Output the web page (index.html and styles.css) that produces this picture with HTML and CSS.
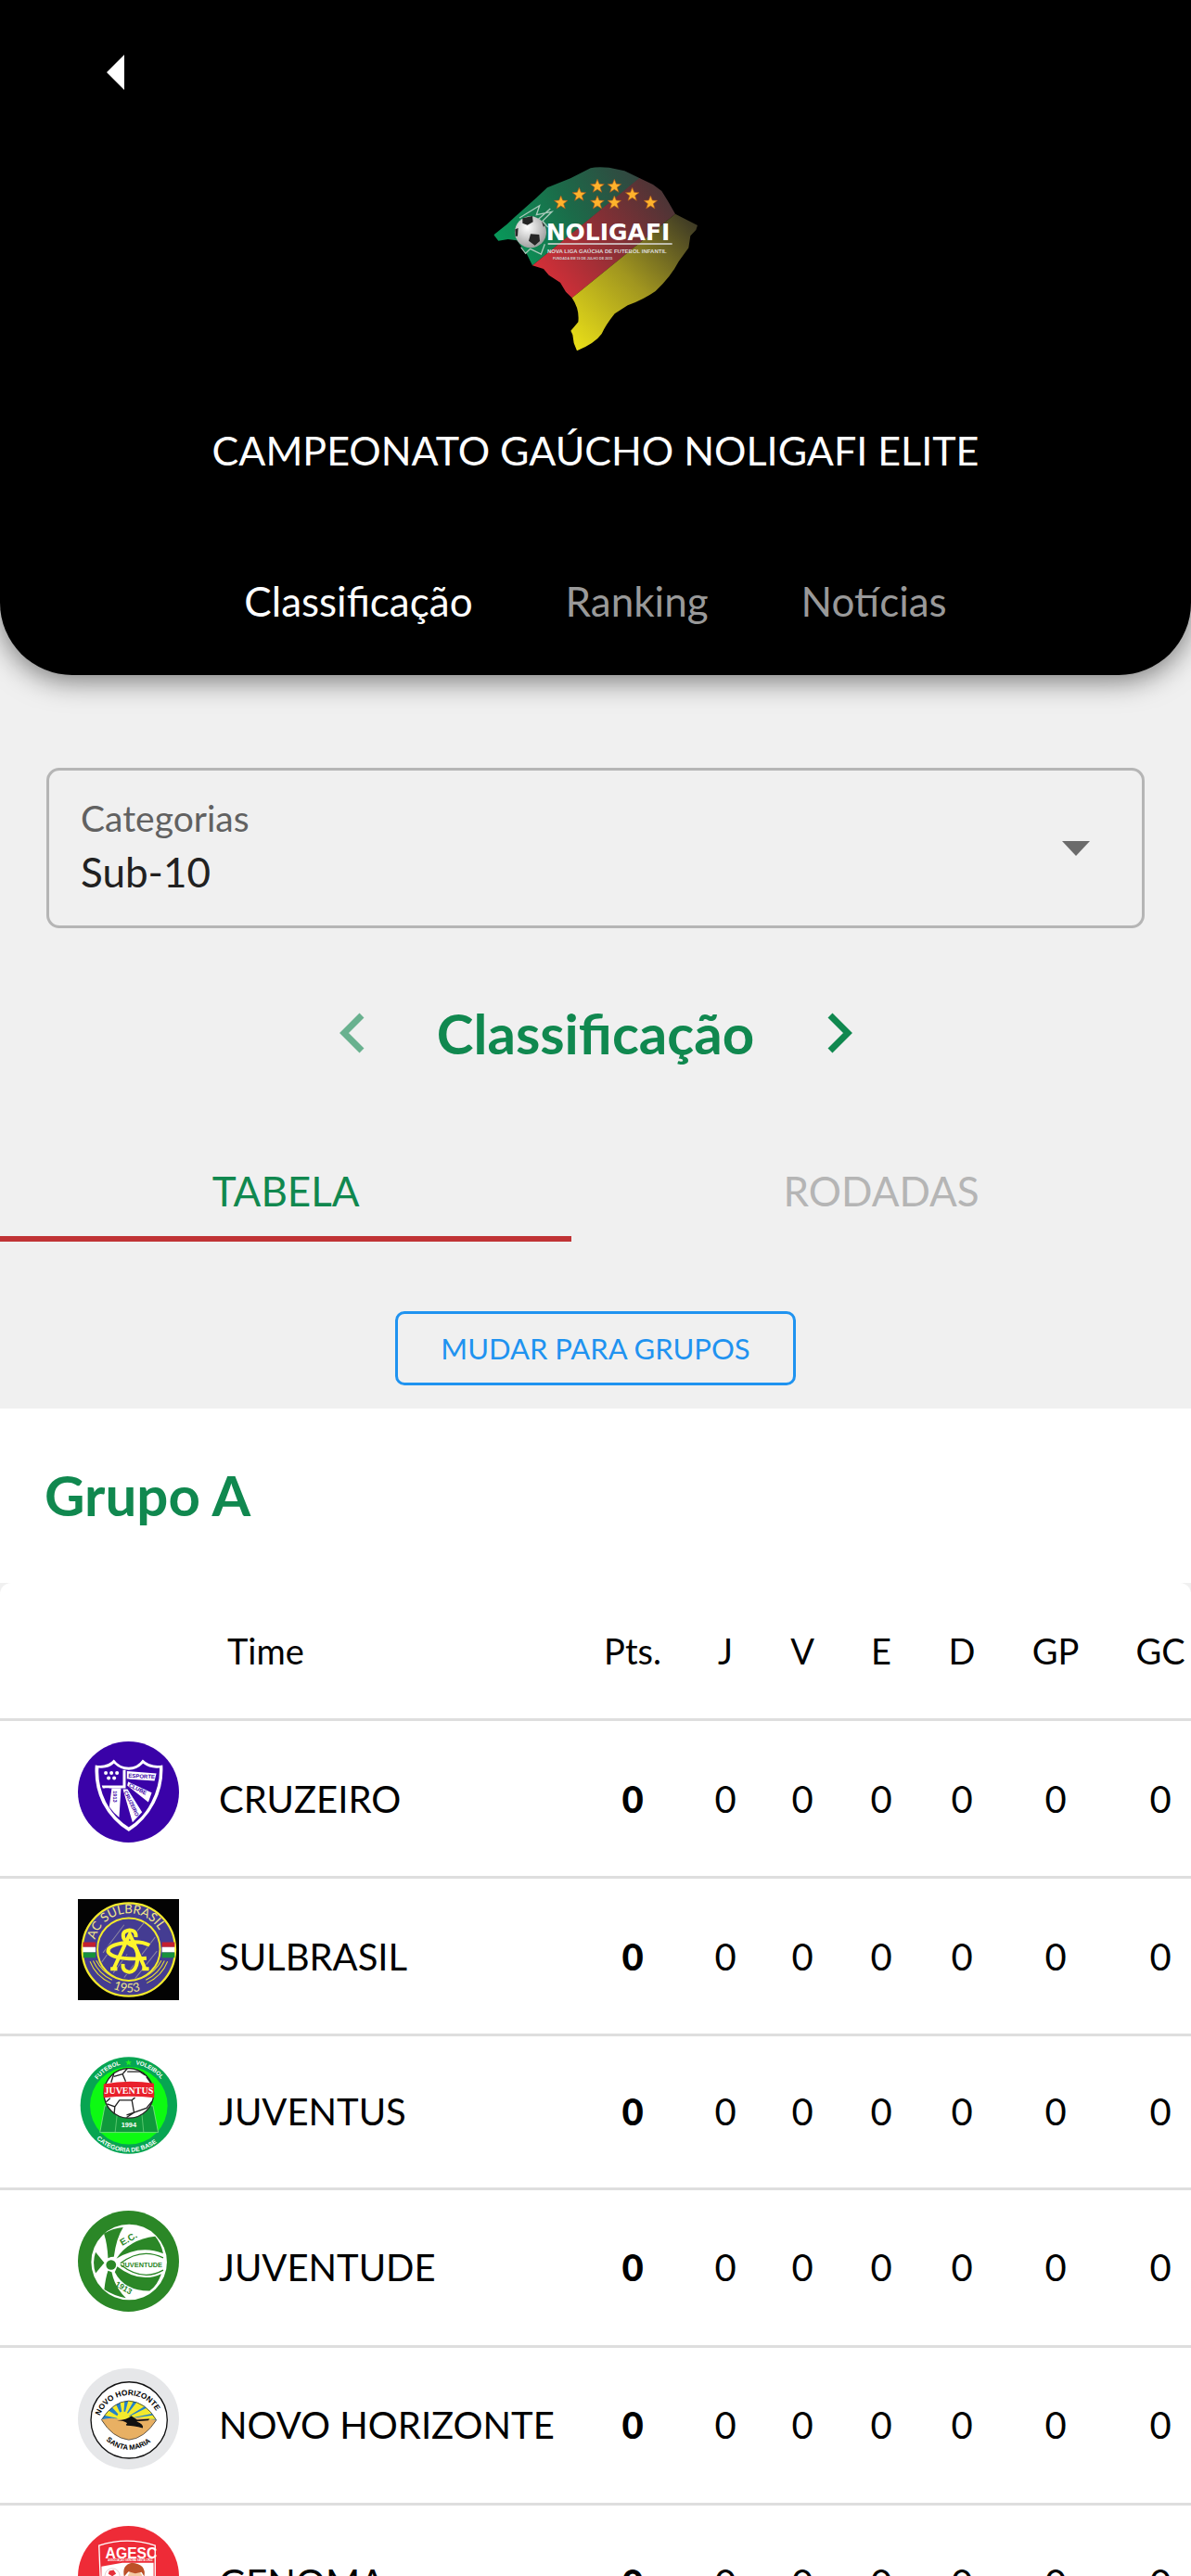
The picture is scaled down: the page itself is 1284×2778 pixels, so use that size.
FILE: index.html
```
<!DOCTYPE html>
<html lang="pt-BR">
<head>
<meta charset="utf-8">
<meta name="viewport" content="width=device-width, initial-scale=1">
<title>Campeonato Gaúcho Noligafi Elite</title>
<link rel="stylesheet" href="styles.css">
</head>
<body>
<div class="app">
  <header class="hero">
    <button class="back" type="button" aria-label="Voltar">
      <svg width="56" height="56" viewBox="0 0 56 56"><path d="M37 9v38L18 28z" fill="#fff"/></svg>
    </button>
    <svg class="hero-logo" width="280" height="230" viewBox="6 0 840 690" role="img" aria-label="Noligafi">
      <defs>
        <linearGradient id="g1" x1="100" y1="300" x2="560" y2="60" gradientUnits="userSpaceOnUse"><stop offset="0" stop-color="#08995a"/><stop offset=".5" stop-color="#1b6b49"/><stop offset="1" stop-color="#34443f"/></linearGradient>
        <linearGradient id="g2" x1="280" y1="450" x2="660" y2="150" gradientUnits="userSpaceOnUse"><stop offset="0" stop-color="#d52f38"/><stop offset=".5" stop-color="#8b2f35"/><stop offset="1" stop-color="#493536"/></linearGradient>
        <linearGradient id="g3" x1="360" y1="640" x2="750" y2="240" gradientUnits="userSpaceOnUse"><stop offset="0" stop-color="#e8de18"/><stop offset=".5" stop-color="#a1961f"/><stop offset="1" stop-color="#3d3925"/></linearGradient>
        <radialGradient id="g4" cx=".4" cy=".35" r=".7"><stop offset="0" stop-color="#fff"/><stop offset="1" stop-color="#999"/></radialGradient>
        <clipPath id="state"><path d="M97 280L140 245L165 222L235 160L270 127L345 97L410 64Q430 58 470 62L520 73L568 96L612 117L640 138L660 170L684 212L756 249L751 264L733 283L727 322L695 366Q670 415 620 462Q580 490 530 508L488 535Q460 570 446 600Q425 630 366 655L356 630L352 603L346 590L370 562Q375 520 350 484L330 464L312 434L275 410L258 390L222 379L205 344L172 298L143 294L112 299Z"/></clipPath>
        <path id="star" d="M0-22L6-7L22-6L9 4L14 20L0 11L-14 20L-9 4L-22-6L-6-7Z"/>
      </defs>
      <g clip-path="url(#state)">
        <path fill="url(#g1)" d="M80 40H640L222 379L80 420Z"/>
        <path fill="url(#g2)" d="M568 96L222 379L200 500H340L350 484L684 212L700 60Z"/>
        <path fill="url(#g3)" d="M684 212L350 484L300 690H780V200Z"/>
      </g>
      <g fill="#ffb32c" stroke="#a8561c" stroke-width="2">
        <use href="#star" x="314" y="175"/><use href="#star" x="373" y="149"/><use href="#star" x="432" y="122"/><use href="#star" x="487" y="122"/><use href="#star" x="432" y="175"/><use href="#star" x="487" y="175"/><use href="#star" x="545" y="149"/><use href="#star" x="604" y="175"/>
      </g>
      <path d="M180 225L245 185L235 215L285 205L255 235L272 255M185 320L200 340L215 325L250 342L262 310M240 230L280 195" fill="none" stroke="#a9c9ba" stroke-width="4"/>
      <circle cx="216" cy="271" r="51" fill="url(#g4)"/>
      <path d="M190 226L222 219L224 238L206 248L190 242ZM216 277L244 279L246 300L230 314L210 299ZM166 262L176 258L174 284L167 284ZM252 236L262 250L258 254Z" fill="#262626"/>
      <text x="266" y="297" class="logo-word">NOLIGAFI</text>
      <path d="M272 309H674" stroke="#ddd" stroke-width="4"/>
      <text x="270" y="338" class="logo-sub">NOVA LIGA GAÚCHA DE FUTEBOL INFANTIL</text>
      <text x="288" y="359" class="logo-tiny">FUNDADA EM 19 DE JULHO DE 2015</text>
    </svg>
    <h1 class="hero-title">CAMPEONATO GAÚCHO NOLIGAFI ELITE</h1>
    <nav class="hero-nav">
      <a href="#classificacao" class="active">Classificação</a>
      <a href="#ranking">Ranking</a>
      <a href="#noticias">Notícias</a>
    </nav>
  </header>

  <main>
    <div class="field">
      <label for="categoria">Categorias</label>
      <select id="categoria"><option>Sub-10</option></select>
      <svg class="caret" width="30" height="18" viewBox="0 0 30 18"><path d="M0 2h30L15 18z" fill="#6b6b6b"/></svg>
    </div>

    <div class="stage" id="classificacao">
      <button type="button" aria-label="Fase anterior" disabled><svg width="72" height="72" viewBox="0 0 72 72"><path d="M47 17L28 36L47 55" /></svg></button>
      <h2>Classificação</h2>
      <button type="button" aria-label="Próxima fase"><svg width="72" height="72" viewBox="0 0 72 72"><path d="M26 17L45 36L26 55"/></svg></button>
    </div>

    <div class="tabs" role="tablist">
      <button type="button" role="tab" aria-selected="true">TABELA</button>
      <button type="button" role="tab" aria-selected="false">RODADAS</button>
    </div>

    <div class="switch"><button type="button">MUDAR PARA GRUPOS</button></div>

    <h2 class="group">Grupo A</h2>

    <div class="table-wrap">
      <table>
        <colgroup><col class="c-logo"><col class="c-team"><col class="c-pts"><col class="c-j"><col class="c-v"><col class="c-e"><col class="c-d"><col class="c-gp"><col class="c-gc"></colgroup>
        <thead><tr><th></th><th class="team" scope="col">Time</th><th scope="col">Pts.</th><th scope="col">J</th><th scope="col">V</th><th scope="col">E</th><th scope="col">D</th><th scope="col">GP</th><th scope="col">GC</th></tr></thead>
        <tbody>
          <tr>
            <td class="logo"><svg viewBox="41 39 326 326" class="crest">
              <circle cx="204" cy="202" r="163" fill="#3a02a8"/>
              <path d="M97 115Q135 122 157 97Q175 122 205 122Q232 122 250 97Q275 122 314 115Q318 180 288 238Q258 296 205 329Q150 296 120 238Q92 180 97 115Z" fill="#fff"/>
              <path d="M108 124Q138 128 157 110Q178 130 205 131Q232 130 251 110Q275 128 304 124Q306 180 278 234Q252 286 205 316Q158 286 131 234Q104 180 108 124Z" fill="#3a02a8"/>
              <path d="M186 131V181H118L121 190H195V131Z" fill="#fff"/>
              <path d="M199 135L294 142L288 166L199 160ZM203 169L279 204L268 235L200 181ZM186 193L201 193L248 267L217 300ZM150 190H180L174 284Q156 270 142 250Z" fill="#fff"/>
              <path d="M128 190H142L136 240ZM199 160L288 172L284 200L203 167Z" fill="#3a02a8"/>
              <g fill="#fff"><circle cx="131" cy="141" r="6"/><circle cx="149" cy="141" r="6"/><circle cx="167" cy="141" r="6"/><circle cx="140" cy="157" r="6"/><circle cx="158" cy="157" r="6"/></g>
              <g fill="#3a02a8" class="crest-bold"><text x="203" y="155" font-size="18" transform="rotate(3 203 155)">ESPORTE</text><text x="204" y="184" font-size="18" transform="rotate(27 204 184)">CLUBE</text><text x="189" y="202" font-size="17" transform="rotate(64 189 202)">CRUZEIRO</text><text x="156" y="198" font-size="17" transform="rotate(90 156 198)">1913</text></g>
            </svg></td>
            <td class="team">CRUZEIRO</td><td class="pts">0</td><td>0</td><td>0</td><td>0</td><td>0</td><td>0</td><td>0</td>
          </tr>
          <tr>
            <td class="logo"><svg viewBox="41 37 326 326" class="crest">
              <path d="M41 37H367V363H41Z" fill="#030303"/>
              <circle cx="205" cy="200" r="150" fill="#443c92" stroke="#f3ea2c" stroke-width="7"/>
              <g><path d="M57 176H98V192H57ZM312 176H353V192H312Z" fill="#c41f30"/><path d="M57 192H98V209H57ZM312 192H353V209H312Z" fill="#fff"/><path d="M58 209H98V226H58ZM312 209H353V226H312Z" fill="#16923c"/></g>
              <circle cx="205" cy="199" r="101" fill="#443c92" stroke="#f3ea2c" stroke-width="6"/>
              <path d="M122 210L190 120M118 240L150 196M155 275L200 215M220 155L255 112M190 290L290 160M225 294L296 205" stroke="#8b85a0" stroke-width="3"/>
              <path d="M80 238Q98 285 147 308M90 236Q108 278 151 298M100 235Q118 270 156 289M330 238Q312 285 263 308M320 236Q302 278 260 298M310 235Q292 270 254 289" fill="none" stroke="#e8df35" stroke-width="3"/>
              <g fill="none"><g stroke="#443c92" stroke-width="17"><path d="M228 160Q230 137 207 137Q182 140 188 162Q194 178 222 190Q240 205 230 250Q222 275 203 272Q184 268 186 246"/><path d="M272 186Q240 168 180 180Q130 190 140 210Q160 235 262 228M156 262L208 150L258 262"/></g><g stroke="#fff52d" stroke-width="12"><path d="M228 160Q230 137 207 137Q182 140 188 162Q194 178 222 190Q240 205 230 250Q222 275 203 272Q184 268 186 246"/><path d="M272 186Q240 168 180 180Q130 190 140 210Q160 235 262 228M156 262L208 150L258 262M146 262H168M248 262H270"/></g></g>
              <path id="arc-sul" d="M96 168A113 113 0 0 1 318 184" fill="none"/><path id="arc-sul2" d="M145 322A136 136 0 0 0 270 322" fill="none"/>
              <g fill="#f1e78a" font-family="Lato, sans-serif"><text font-size="40"><textPath href="#arc-sul">AC SULBRASIL</textPath></text><text font-size="39"><textPath href="#arc-sul2" startOffset="10">1953</textPath></text></g>
            </svg></td>
            <td class="team">SULBRASIL</td><td class="pts">0</td><td>0</td><td>0</td><td>0</td><td>0</td><td>0</td><td>0</td>
          </tr>
          <tr>
            <td class="logo"><svg viewBox="41 52 326 314" class="crest">
              <circle cx="205" cy="209" r="156" fill="#07a552"/><circle cx="205" cy="210" r="125" fill="#0dfa12"/>
              <path d="M128 210H283L300 296H112Z" fill="#10993c" stroke="#9bec9d" stroke-width="2"/><path d="M170 215L161 296M245 215L253 296" stroke="#7ed987" stroke-width="2"/>
              <circle cx="205" cy="170" r="80" fill="#fff" stroke="#222" stroke-width="4"/>
              <path d="M157 106L148 135M200 90L185 108L157 116M185 108L195 132M200 100H240L258 112M262 117L285 150M145 186L132 198M135 204L160 213L175 192H215L222 232L198 240M160 213L158 236M222 232L198 248M222 232L262 218L280 196M215 192L225 184" fill="none" stroke="#222" stroke-width="4"/>
              <path d="M124 140Q205 125 286 138L287 184Q205 176 124 184Z" fill="#e9202b"/>
              <path id="arc-juv" d="M104 126A130 130 0 0 1 316 134" fill="none"/><path id="arc-juv2" d="M101 317A149 149 0 0 0 309 317" fill="none"/>
              <text class="serif" x="205" y="171" font-size="30" text-anchor="middle" fill="#fff">JUVENTUS</text>
              <g class="crest-bold" fill="#fff"><text font-size="19"><textPath href="#arc-juv">FUTEBOL</textPath></text><text font-size="19"><textPath href="#arc-juv" startOffset="56%">VOLEIBOL</textPath></text><text font-size="20"><textPath href="#arc-juv2">CATEGORIA DE BASE</textPath></text><text x="205" y="278" font-size="22" text-anchor="middle">1994</text></g>
              <path d="M204 62l3 6 7 0-5 5 2 7-7-4-6 4 2-7-6-5 7 0z" fill="#20f020"/>
            </svg></td>
            <td class="team">JUVENTUS</td><td class="pts">0</td><td>0</td><td>0</td><td>0</td><td>0</td><td>0</td><td>0</td>
          </tr>
          <tr>
            <td class="logo"><svg viewBox="41 42 326 326" class="crest">
              <circle cx="204" cy="205" r="163" fill="#2b8727"/><circle cx="206" cy="208" r="122" fill="#fff"/>
              <g fill="#2b8727"><path d="M125 116Q155 98 187 96Q165 130 157 191Q147 191 138 195Q136 150 125 116Z"/><path d="M98 176L126 210L98 244Q86 210 98 176Z"/><path d="M165 197Q205 135 290 125Q308 145 316 180Q240 150 165 197Z"/><path d="M168 222Q240 278 310 246Q296 285 272 301Q190 300 160 240Z"/><path d="M138 236Q130 260 126 296Q155 316 196 324Q160 290 150 240Z"/><circle cx="148" cy="217" r="16"/></g>
              <path d="M178 212Q245 160 316 194M178 216Q250 272 316 234" fill="none" stroke="#2b8727" stroke-width="4"/>
              <g fill="#2b8727" class="crest-bold"><text x="180" y="224" font-size="22">JUVENTUDE</text><text x="184" y="156" font-size="30" transform="rotate(-30 184 156)">E.C.</text><text x="159" y="284" font-size="26" transform="rotate(30 159 284)">1913</text></g>
            </svg></td>
            <td class="team">JUVENTUDE</td><td class="pts">0</td><td>0</td><td>0</td><td>0</td><td>0</td><td>0</td><td>0</td>
          </tr>
          <tr>
            <td class="logo"><svg viewBox="41 41 326 326" class="crest">
              <circle cx="204" cy="204" r="163" fill="#e6e7e9"/><circle cx="206" cy="208" r="123" fill="#fff" stroke="#111" stroke-width="4"/>
              <clipPath id="eye"><path d="M117 207Q155 148 205 146Q260 150 294 208Q255 268 205 272Q152 265 117 207Z"/></clipPath>
              <g clip-path="url(#eye)"><path d="M110 140H300V220H110Z" fill="#2482cb"/><path d="M187 206L112 190L128 170ZM187 206L140 155L158 145ZM187 206L175 140H192ZM187 206L205 140L222 145ZM187 206L235 145L262 160ZM187 206L270 165L290 185ZM187 206L300 190V205Z" fill="#f4ea2d"/><circle cx="187" cy="200" r="20" fill="#f4ea2d"/><path d="M110 208Q150 196 180 206L235 200L300 208V280H110Z" fill="#e8b063"/></g>
              <path d="M167 209Q200 208 213 194L232 207L272 204L268 209L230 212Q255 222 250 234Q220 226 200 226Q192 224 200 218Q190 209 167 209Z" fill="#111"/>
              <path d="M117 207Q155 148 205 146Q260 150 294 208Q255 268 205 272Q152 265 117 207Z" fill="none" stroke="#222" stroke-width="2"/>
              <path id="arc-nh" d="M112 194A100 100 0 0 1 302 200" fill="none"/><path id="arc-nh2" d="M132 273A106 106 0 0 0 284 270" fill="none"/>
              <g class="crest-bold"><text font-size="25"><textPath href="#arc-nh">NOVO HORIZONTE</textPath></text><text font-size="23"><textPath href="#arc-nh2">SANTA MARIA</textPath></text></g>
            </svg></td>
            <td class="team">NOVO HORIZONTE</td><td class="pts">0</td><td>0</td><td>0</td><td>0</td><td>0</td><td>0</td><td>0</td>
          </tr>
          <tr>
            <td class="logo"><svg viewBox="41 549 326 326" class="crest">
              <circle cx="204" cy="712" r="163" fill="#ee2b37"/>
              <path d="M109 612Q200 582 290 612V760Q260 820 200 840Q140 820 115 760Z" fill="#ee2b37" stroke="#fff" stroke-width="4"/>
              <path d="M117 680L184 668H285V760Q250 810 200 830Q140 800 117 750Z" fill="#fff"/>
              <circle cx="152" cy="710" r="24" fill="#fff" stroke="#d8bcbc" stroke-width="2"/><path d="M142 694l14-3 8 12-12 8-13-7zM130 712l10 5-2 12zM160 716l12-4v16z" fill="#e6303a"/>
              <circle cx="225" cy="716" r="24" fill="#f4c9a2"/><path d="M190 712Q182 675 215 668Q262 672 255 712L246 698L226 702L204 696Z" fill="#bd5128"/>
              <g fill="#fff" class="crest-bold"><text x="213" y="653" font-size="47" text-anchor="middle">AGESC</text><text x="210" y="662" font-size="8" text-anchor="middle">ASSOCIAÇÃO GENOMA SANTA CRUZ</text></g>
            </svg></td>
            <td class="team">GENOMA</td><td class="pts">0</td><td>0</td><td>0</td><td>0</td><td>0</td><td>0</td><td>0</td>
          </tr>
        </tbody>
      </table>
    </div>
  </main>
</div>
</body>
</html>
```
FILE: styles.css
```
* { box-sizing: border-box; }

body {
  margin: 0;
  background: #f0f0f0;
  color: #000;
  font-family: Lato, "Open Sans", sans-serif;
}

button, select { font: inherit; color: inherit; background: none; border: 0; margin: 0; padding: 0; }
button svg, .crest, .hero-logo { display: block; }
h1, h2 { margin: 0; }

/* Scrolling shell */
.app { height: 100vh; overflow-x: hidden; overflow-y: auto; scrollbar-width: none; }

/* Header */
.hero {
  display: flex;
  flex-direction: column;
  align-items: center;
  padding: 50px 0 50px;
  background: #000;
  color: #fff;
  border-radius: 0 0 78px 78px;
  box-shadow: 0 6px 30px rgba(0, 0, 0, .5);
}
.back { align-self: flex-start; margin-left: 97px; }
.hero-logo { margin-top: 54px; }
.hero-title { margin-top: 66px; font-size: 43px; font-weight: 400; line-height: 60px; }
.hero-nav { display: flex; gap: 100px; margin-top: 102px; font-size: 44px; line-height: 60px; }
.hero-nav a { color: #999; text-decoration: none; }
.hero-nav .active { color: #fff; }

.logo-word { font: 700 75px "DejaVu Sans", sans-serif; fill: #fff; }
.logo-sub { font: 700 18px "Liberation Sans", sans-serif; fill: #ddd; }
.logo-tiny { font: 700 11px "Liberation Sans", sans-serif; fill: #ccc; }

/* Category picker */
.field {
  display: grid;
  grid-template-columns: 1fr auto;
  row-gap: 4px;
  margin: 100px 50px 0;
  padding: 27px 56px 28px 34px;
  border: 3px solid #b5b5b5;
  border-radius: 14px;
}
.field label { grid-area: 1 / 1; font-size: 39px; line-height: 48px; color: #616161; }
.field select { grid-area: 2 / 1 / 3 / 3; height: 60px; appearance: none; font-size: 44px; color: #212121; }
.caret { grid-area: 1 / 2 / 3 / 3; align-self: center; pointer-events: none; }

/* Stage switcher */
.stage { display: flex; justify-content: center; align-items: center; gap: 56px; margin-top: 77px; color: #10884f; }
.stage h2, .group { font-size: 60px; font-weight: 700; line-height: 72px; color: #10884f; }
.stage button:disabled { opacity: .6; color: #10884f; }
.stage path { fill: none; stroke: currentColor; stroke-width: 7; }

/* Tabs */
.tabs { display: grid; grid-template-columns: 48% 52%; margin-top: 85px; font-size: 44px; color: #b5b5b5; }
.tabs button { height: 104px; border-bottom: 6px solid transparent; }
.tabs [aria-selected="true"] { color: #10884f; border-color: #c03335; }

.switch { display: flex; justify-content: center; padding: 75px 0 25px; }
.switch button { height: 80px; padding: 0 46px; border: 3px solid #1f93f0; border-radius: 10px; color: #1f93f0; font-size: 31px; }

.group { padding: 57px 48px 59px; background: #fff; }

/* Standings */
.table-wrap { overflow-x: auto; scrollbar-width: none; background: #fff; border-radius: 12px 12px 0 0; }
table { width: 1304px; table-layout: fixed; border-collapse: separate; border-spacing: 0; font-size: 40px; }
th, td { padding: 0; border-bottom: 3px solid #dedede; text-align: center; vertical-align: middle; }
th { height: 149px; font-size: 38px; font-weight: 400; }
td.logo { padding: 22px 0 36px 84px; }
td.team { text-align: left; padding-left: 18px; }
th.team { text-align: left; padding-left: 27px; }
td.pts { font-weight: 900; }
.crest { width: 109px; }
.c-logo { width: 218px; }
.c-pts { width: 112px; }
.c-j { width: 88px; }
.c-v { width: 78px; }
.c-e { width: 92px; }
.c-d { width: 82px; }
.c-gp { width: 120px; }
.c-gc { width: 106px; }

.crest-bold { font-family: "Liberation Sans", sans-serif; font-weight: 700; }
.serif { font-family: "Liberation Serif", serif; font-weight: 700; }
```
